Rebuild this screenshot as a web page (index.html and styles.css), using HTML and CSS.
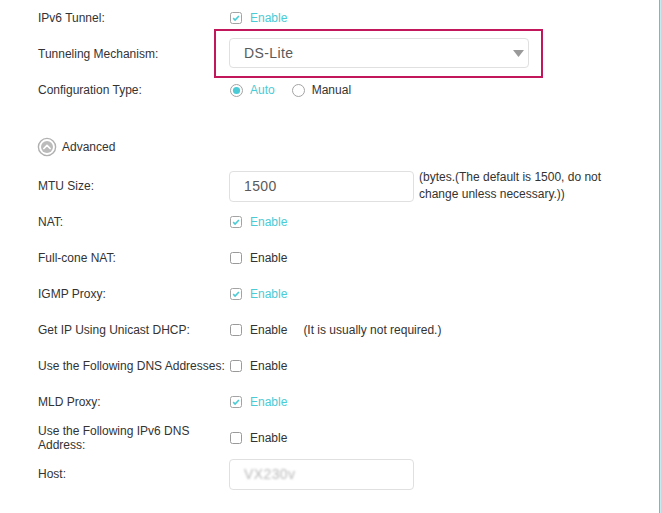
FILE: index.html
```html
<!DOCTYPE html>
<html>
<head>
<meta charset="utf-8">
<link rel="stylesheet" href="styles.css">
</head>
<body>
<div class="page">
  <div class="form">
    <div class="row">
      <div class="label">IPv6 Tunnel:</div>
      <div class="control">
        <svg class="check" viewBox="0 0 12 12"><rect x="0.5" y="0.5" width="11" height="11" rx="2" fill="#fff" stroke="#a3a3a3"/><path d="M3.2 6.1 L5.1 8 L8.9 4" fill="none" stroke="#4acbd6" stroke-width="1.6"/></svg>
        <span class="opt on">Enable</span>
      </div>
    </div>
    <div class="row">
      <div class="label">Tunneling Mechanism:</div>
      <div class="control">
        <div class="hl">
          <div class="select"><span>DS-Lite</span><svg class="arrow" viewBox="0 0 11 7"><path d="M0 0 H11 L5.5 7 Z" fill="#9a9a9a"/></svg></div>
        </div>
      </div>
    </div>
    <div class="row">
      <div class="label">Configuration Type:</div>
      <div class="control">
        <svg class="radio" viewBox="0 0 13 13"><circle cx="6.5" cy="6.5" r="6" fill="#fff" stroke="#a3a3a3"/><circle cx="6.5" cy="6.5" r="3.6" fill="#4acbd6"/></svg>
        <span class="opt on">Auto</span>
        <svg class="radio second" viewBox="0 0 13 13"><circle cx="6.5" cy="6.5" r="6" fill="#fff" stroke="#a3a3a3"/></svg>
        <span class="opt">Manual</span>
      </div>
    </div>
    <div class="spacer"></div>
    <div class="row">
      <div class="adv">
        <svg class="adv-icon" viewBox="0 0 20 20"><circle cx="10" cy="10" r="8.6" fill="#fff" stroke="#b0b0b0" stroke-width="1.4"/><circle cx="10" cy="10" r="6" fill="#bbb"/><path d="M6.9 11.5 L10 8.4 L13.1 11.5" fill="none" stroke="#fff" stroke-width="1.7" stroke-linecap="round" stroke-linejoin="round"/></svg>
        <span>Advanced</span>
      </div>
    </div>
    <div class="row mtu">
      <div class="label">MTU Size:</div>
      <div class="control">
        <div class="input">1500</div>
        <div class="note">(bytes.(The default is 1500, do not change unless necessary.))</div>
      </div>
    </div>
    <div class="row">
      <div class="label">NAT:</div>
      <div class="control">
        <svg class="check" viewBox="0 0 12 12"><rect x="0.5" y="0.5" width="11" height="11" rx="2" fill="#fff" stroke="#a3a3a3"/><path d="M3.2 6.1 L5.1 8 L8.9 4" fill="none" stroke="#4acbd6" stroke-width="1.6"/></svg>
        <span class="opt on">Enable</span>
      </div>
    </div>
    <div class="row">
      <div class="label">Full-cone NAT:</div>
      <div class="control">
        <svg class="check" viewBox="0 0 12 12"><rect x="0.5" y="0.5" width="11" height="11" rx="2" fill="#fff" stroke="#9a9a9a"/></svg>
        <span class="opt">Enable</span>
      </div>
    </div>
    <div class="row">
      <div class="label">IGMP Proxy:</div>
      <div class="control">
        <svg class="check" viewBox="0 0 12 12"><rect x="0.5" y="0.5" width="11" height="11" rx="2" fill="#fff" stroke="#a3a3a3"/><path d="M3.2 6.1 L5.1 8 L8.9 4" fill="none" stroke="#4acbd6" stroke-width="1.6"/></svg>
        <span class="opt on">Enable</span>
      </div>
    </div>
    <div class="row">
      <div class="label">Get IP Using Unicast DHCP:</div>
      <div class="control">
        <svg class="check" viewBox="0 0 12 12"><rect x="0.5" y="0.5" width="11" height="11" rx="2" fill="#fff" stroke="#9a9a9a"/></svg>
        <span class="opt">Enable</span>
        <span class="hint">(It is usually not required.)</span>
      </div>
    </div>
    <div class="row">
      <div class="label">Use the Following DNS Addresses:</div>
      <div class="control">
        <svg class="check" viewBox="0 0 12 12"><rect x="0.5" y="0.5" width="11" height="11" rx="2" fill="#fff" stroke="#9a9a9a"/></svg>
        <span class="opt">Enable</span>
      </div>
    </div>
    <div class="row">
      <div class="label">MLD Proxy:</div>
      <div class="control">
        <svg class="check" viewBox="0 0 12 12"><rect x="0.5" y="0.5" width="11" height="11" rx="2" fill="#fff" stroke="#a3a3a3"/><path d="M3.2 6.1 L5.1 8 L8.9 4" fill="none" stroke="#4acbd6" stroke-width="1.6"/></svg>
        <span class="opt on">Enable</span>
      </div>
    </div>
    <div class="row">
      <div class="label">Use the Following IPv6 DNS Address:</div>
      <div class="control">
        <svg class="check" viewBox="0 0 12 12"><rect x="0.5" y="0.5" width="11" height="11" rx="2" fill="#fff" stroke="#9a9a9a"/></svg>
        <span class="opt">Enable</span>
      </div>
    </div>
    <div class="row">
      <div class="label">Host:</div>
      <div class="control">
        <div class="input"><span class="blur">VX230v</span></div>
      </div>
    </div>
  </div>
</div>
</body>
</html>
```
FILE: styles.css
```css
html, body {
  margin: 0;
  padding: 0;
  background: #fff;
}
body {
  font-family: "Liberation Sans", Arial, sans-serif;
  font-size: 12px;
  color: #333;
}
.page {
  width: 659px;
  height: 513px;
  border-right: 1px solid #4acbd6;
  box-shadow: 1px 0 0 #c3ecf1;
  overflow: hidden;
}
.form {
  padding-left: 38px;
}
.row {
  display: flex;
  align-items: center;
  height: 36px;
}
.label {
  width: 191px;
  flex: none;
  line-height: 14px;
}
.control {
  display: flex;
  align-items: center;
}
.check {
  width: 12px;
  height: 12px;
  margin-left: 1px;
  margin-right: 8px;
  flex: none;
}
.radio {
  width: 13px;
  height: 13px;
  margin-left: 1px;
  margin-right: 7px;
  flex: none;
}
.radio.second {
  margin-left: 17px;
  margin-right: 7px;
}
.opt.on {
  color: #4acbd6;
}
.hint {
  margin-left: 16px;
}
.hl {
  position: relative;
  top: -1px;
}
.hl::before {
  content: "";
  position: absolute;
  left: -15px;
  right: -14px;
  top: -9px;
  bottom: -10px;
  border: 2px solid #c2185b;
  pointer-events: none;
}
.select {
  width: 300px;
  height: 30px;
  box-sizing: border-box;
  border: 1px solid #e0e0e0;
  border-radius: 4px;
  display: flex;
  align-items: center;
  justify-content: space-between;
  padding: 0 4px 0 14px;
  font-size: 14px;
  letter-spacing: 0.4px;
  color: #5a5a5a;
}
.arrow {
  width: 11px;
  height: 7px;
  display: block;
}
.spacer {
  height: 21px;
}
.adv {
  display: flex;
  align-items: center;
}
.adv-icon {
  width: 20px;
  height: 20px;
  margin-left: -1px;
  margin-right: 5px;
}
.mtu {
  margin-top: 3px;
}
.input {
  width: 185px;
  height: 31px;
  box-sizing: border-box;
  border: 1px solid #e0e0e0;
  border-radius: 4px;
  display: flex;
  align-items: center;
  padding-left: 14px;
  font-size: 14px;
  letter-spacing: 0.4px;
  color: #5a5a5a;
}
.note {
  width: 192px;
  margin-left: 5px;
  line-height: 17px;
}
.blur {
  color: #b8b8b8;
  font-size: 14px;
  filter: blur(1px);
}
```
